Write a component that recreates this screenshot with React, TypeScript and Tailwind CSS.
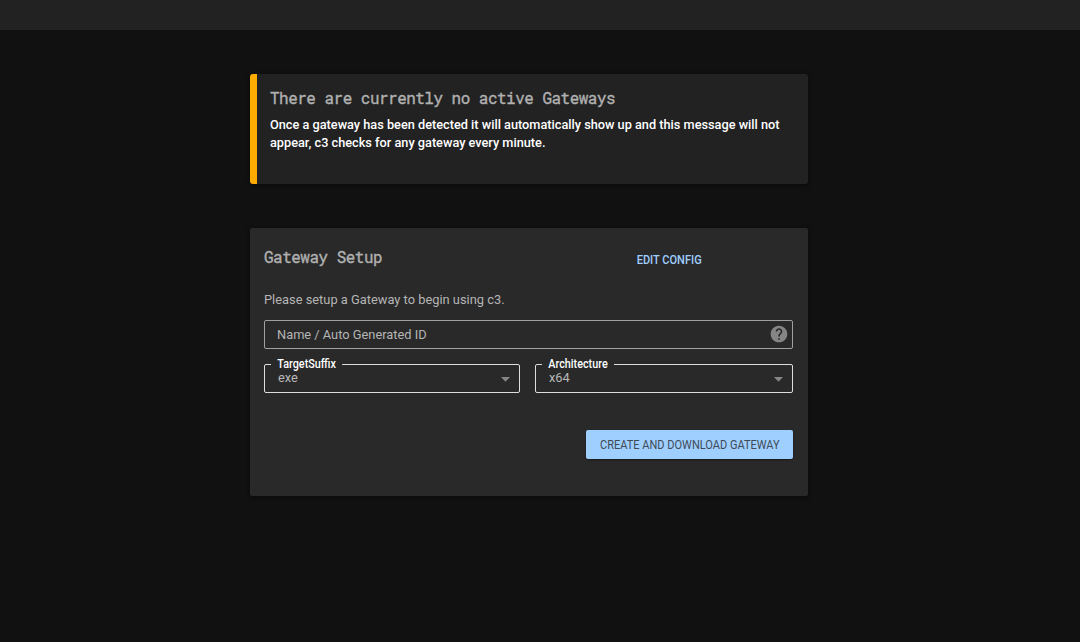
import React from "react";

function Title({ children }: { children: React.ReactNode }) {
  return (
    <h2 className="origin-left scale-x-[0.936] font-['Roboto_Mono','Liberation_Mono',monospace] text-[17px] leading-[22px] tracking-[-0.5px] whitespace-nowrap text-[#b0b0b0] [-webkit-text-stroke:0.4px_#b0b0b0]">
      {children}
    </h2>
  );
}

function SelectField({ label, value, className }: { label: string; value: string; className: string }) {
  return (
    <div className={`relative flex h-[29px] items-center justify-between rounded-[2px] border border-[#dedede] pr-[9px] pl-[13px] ${className}`}>
      <span className="absolute -top-[8px] left-[6px] origin-left scale-x-[0.9] bg-[#292929] pr-[7px] pl-[7px] text-[12px] leading-[14px] font-medium whitespace-nowrap text-white">
        {label}
      </span>
      <span className="-mt-[3px] origin-left scale-x-[0.95] text-[13.5px] leading-[16px] text-[#b8b8b8]">{value}</span>
      <svg className="mt-[1px] h-[5px] w-[9px]" viewBox="0 0 9 5" fill="#858585">
        <path d="M0 0h9L4.5 4.8z" />
      </svg>
    </div>
  );
}

export default function App() {
  return (
    <div className="h-[642px] w-[1080px] overflow-hidden bg-[#111111] font-['Roboto','Liberation_Sans',sans-serif]">
      <header className="h-[30px] bg-[#222222]" />
      <main className="ml-[249.5px] flex w-[558px] flex-col gap-[44px] pt-[44px]">
        <section className="h-[110px] rounded-[3px] border-l-[7.5px] border-[#ffab00] bg-[#222222] pt-[13px] pl-[13px] shadow-[0_1px_4px_rgba(0,0,0,0.5)]">
          <Title>There are currently no active Gateways</Title>
          <p className="mt-[6px] origin-left scale-x-[0.943] text-[13.5px] leading-[18px] font-medium whitespace-nowrap text-white">
            Once a gateway has been detected it will automatically show up and this message will not
            <br />
            appear, c3 checks for any gateway every minute.
          </p>
        </section>
        <section className="flex h-[268px] flex-col rounded-[2px] bg-[#292929] px-[14.5px] pt-[18px] shadow-[0_1px_4px_rgba(0,0,0,0.5)]">
          <div className="flex justify-between pr-[91px]">
            <Title>Gateway Setup</Title>
            <button className="mt-[5px] origin-right scale-x-[0.92] text-[12px] leading-[16px] font-medium text-[#9fcfff]">EDIT CONFIG</button>
          </div>
          <p className="mt-[22px] origin-left scale-x-[0.952] text-[13.5px] leading-[18px] text-[#b5b5b5]">Please setup a Gateway to begin using c3.</p>
          <div className="mt-[12px] flex h-[29px] shrink-0 items-center justify-between rounded-[2px] border border-[#a0a0a0] pr-[3px] pl-[12px]">
            <span className="-mt-[1px] origin-left scale-x-[0.95] text-[13.5px] leading-[16px] text-[#b5b5b5]">Name / Auto Generated ID</span>
            <svg className="-mt-[1px] h-[20px] w-[20px]" viewBox="0 0 24 24" fill="#858585">
              <path d="M12 2C6.48 2 2 6.48 2 12s4.48 10 10 10 10-4.48 10-10S17.52 2 12 2zm1 17h-2v-2h2v2zm2.07-7.75l-.9.92C13.45 12.9 13 13.5 13 15h-2v-.5c0-1.1.45-2.1 1.17-2.83l1.24-1.26c.37-.36.59-.86.59-1.41 0-1.1-.9-2-2-2s-2 .9-2 2H8c0-2.21 1.79-4 4-4s4 1.79 4 4c0 .88-.36 1.68-.93 2.25z" />
            </svg>
          </div>
          <div className="mt-[15px] flex justify-between">
            <SelectField label="TargetSuffix" value="exe" className="w-[256px]" />
            <SelectField label="Architecture" value="x64" className="w-[258px]" />
          </div>
          <button className="mt-[37px] flex h-[29px] w-[207px] items-center justify-center self-end rounded-[2px] bg-[#9fcfff] text-[12px] leading-[16px] whitespace-nowrap text-[#404a55] shadow-[0_1px_2px_rgba(0,0,0,0.4)]">
            <span className="scale-x-[0.918]">CREATE AND DOWNLOAD GATEWAY</span>
          </button>
        </section>
      </main>
    </div>
  );
}
